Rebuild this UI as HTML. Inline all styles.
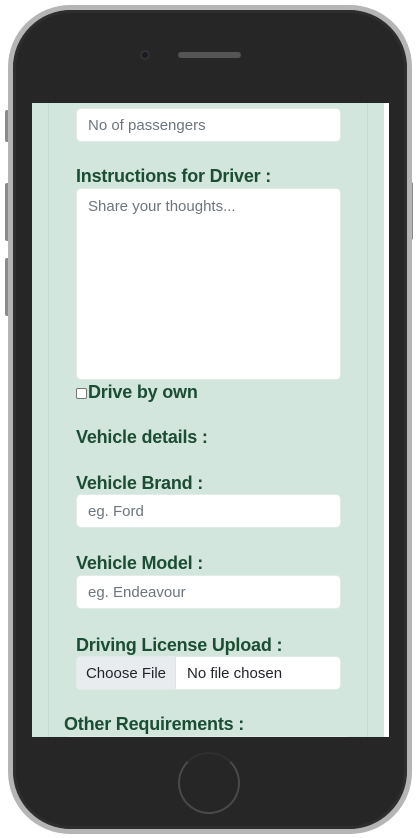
<!DOCTYPE html>
<html><head><meta charset="utf-8"><style>
*{box-sizing:border-box;margin:0;padding:0}
body{width:417px;height:838px;background:#fff;position:relative;overflow:hidden;font-family:"Liberation Sans",sans-serif}
.btn{position:absolute;background:#8a8a8a;border-radius:2px}
.body{position:absolute;left:8px;top:5px;width:404px;height:829px;border-radius:62px;background:#b5b5b5}
.inner{position:absolute;left:13px;top:10px;width:394px;height:819px;border-radius:58px;background:#262626;box-shadow:inset 0 0 0 3px #2e2e2e}
.screen{position:absolute;left:32px;top:103px;width:357px;height:634px;background:#fff;overflow:hidden}
.content{position:absolute;left:0;top:0;width:352px;height:634px;background:#d3e6dd}
.vl{position:absolute;top:0;height:634px;width:1px;background:#c4dccf}
.lbl{position:absolute;color:#1b4d33;font-weight:bold;font-size:18px;letter-spacing:-0.2px}
.inp{position:absolute;left:44px;width:265px;background:#fff;border:1px solid #e2ebe7;border-radius:5px;color:#6c757d;font-size:15px;padding-left:11px}
</style></head><body>
<div class="btn" style="left:5px;top:110px;width:5px;height:32px"></div>
<div class="btn" style="left:5px;top:183px;width:5px;height:58px"></div>
<div class="btn" style="left:5px;top:258px;width:5px;height:58px"></div>
<div class="btn" style="left:408px;top:182px;width:5px;height:58px"></div>
<div class="body"></div>
<div class="inner"></div>
<div style="position:absolute;left:140px;top:50px;width:10px;height:10px;border-radius:50%;background:#1a1a22;box-shadow:inset 0 0 0 2px #333"></div>
<div style="position:absolute;left:178px;top:52px;width:63px;height:6px;border-radius:3px;background:#555"></div>
<div style="position:absolute;left:178px;top:752px;width:62px;height:62px;border-radius:50%;border:2px solid #4a4a4a;border-top-color:#2f2f2f"></div>
<div class="screen"><div class="content">
<div class="vl" style="left:16px"></div><div class="vl" style="left:335px"></div>
<div class="inp" style="top:5px;height:34px;line-height:34px">No of passengers</div>
<div class="lbl" style="top:63px;left:44px">Instructions for Driver :</div>
<div class="inp" style="top:85px;height:192px;padding-top:9px">Share your thoughts...</div>
<div style="position:absolute;left:44px;top:285px;width:11px;height:11px;border:1px solid #777;border-radius:2px;background:#fff"></div>
<div class="lbl" style="top:279px;left:56px">Drive by own</div>
<div class="lbl" style="top:324px;left:44px">Vehicle details :</div>
<div class="lbl" style="top:370px;left:44px">Vehicle Brand :</div>
<div class="inp" style="top:391px;height:34px;line-height:34px">eg. Ford</div>
<div class="lbl" style="top:450px;left:44px">Vehicle Model :</div>
<div class="inp" style="top:472px;height:34px;line-height:34px">eg. Endeavour</div>
<div class="lbl" style="top:532px;left:44px">Driving License Upload :</div>
<div class="inp" style="top:553px;height:34px;line-height:34px;padding-left:0;color:#212529;overflow:hidden"><span style="display:inline-block;width:99px;background:#e9ecef;border-right:1px solid #dee2e6;text-align:center">Choose File</span><span style="padding-left:11px">No file chosen</span></div>
<div class="lbl" style="top:611px;left:32px">Other Requirements :</div>
<div class="inp" style="top:633px;left:34px;width:284px;height:20px"></div>
</div></div>
</body></html>
